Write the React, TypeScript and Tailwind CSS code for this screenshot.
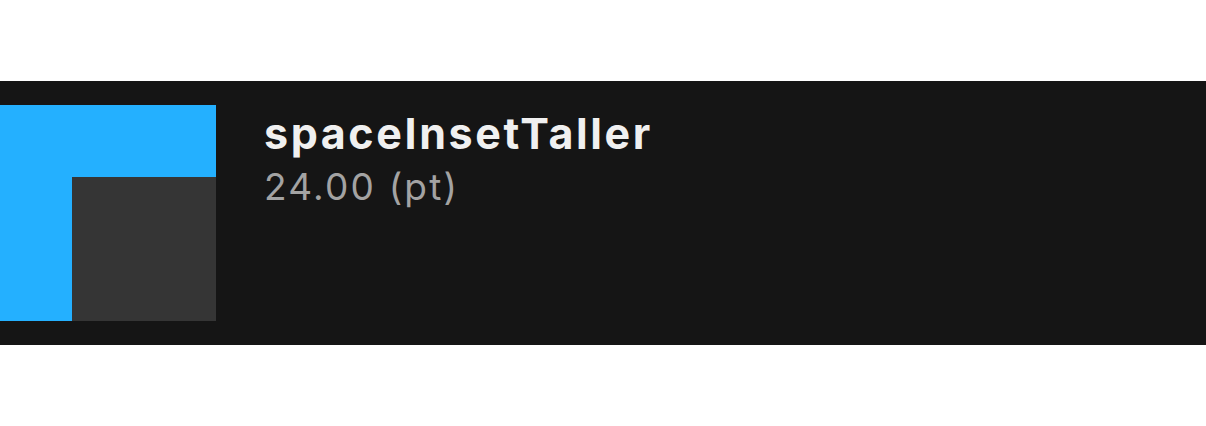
import React from 'react';

const SpacingSwatch: React.FC = () => (
  <div className="w-[216px] h-[216px] bg-[#24b0ff] flex items-end justify-end shrink-0">
    <div className="w-[144px] h-[144px] bg-[#353535]" />
  </div>
);

const App: React.FC = () => {
  return (
    <div className="w-[1206px] h-[426px] bg-white pt-[81px]" style={{ fontFamily: 'Inter, "Noto Sans", sans-serif' }}>
      <div className="h-[264px] bg-[#151515] py-6 flex gap-12">
        <SpacingSwatch />
        <div className="flex flex-col pt-[4px]">
          <div className="text-[43px] leading-[48px] font-bold text-[#f0f0f0] tracking-[2.6px]">spaceInsetTaller</div>
          <div className="text-[37px] leading-[44px] text-[#a3a3a3] mt-[8px] tracking-[2.2px]">24.00 (pt)</div>
        </div>
      </div>
    </div>
  );
};

export default App;
